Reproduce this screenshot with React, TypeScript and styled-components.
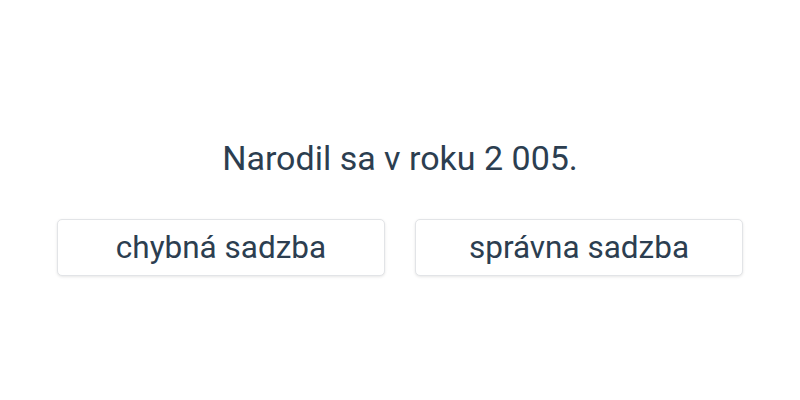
import React from 'react';
import styled, { createGlobalStyle } from 'styled-components';

const GlobalStyle = createGlobalStyle`
  html, body {
    margin: 0;
    padding: 0;
    background: #fff;
  }
  body {
    font-family: Roboto, 'Noto Sans', sans-serif;
    color: #2c3e50;
  }
`;

const Page = styled.div`
  width: 800px;
  height: 400px;
  display: flex;
  flex-direction: column;
  align-items: center;
  padding-top: 137px;
  box-sizing: border-box;
`;

const Sentence = styled.p`
  margin: 0;
  font-size: 34px;
  line-height: 42px;
  color: #2c3e50;
`;

const Choices = styled.div`
  margin-top: 40px;
  display: grid;
  grid-template-columns: 328px 328px;
  gap: 30px;
`;

const Choice = styled.button`
  height: 57px;
  background: #fff;
  border: 1px solid #e2e4e7;
  border-radius: 5px;
  box-shadow: 0 1px 3px rgba(0, 0, 0, 0.1);
  font-family: Roboto, 'Noto Sans', sans-serif;
  font-size: 31.5px;
  color: #2c3e50;
  cursor: pointer;
  padding: 0;
`;

const App: React.FC = () => {
  return (
    <>
      <GlobalStyle />
      <Page>
        <Sentence>Narodil sa v roku 2 005.</Sentence>
        <Choices>
          <Choice>chybná sadzba</Choice>
          <Choice>správna sadzba</Choice>
        </Choices>
      </Page>
    </>
  );
};

export default App;
